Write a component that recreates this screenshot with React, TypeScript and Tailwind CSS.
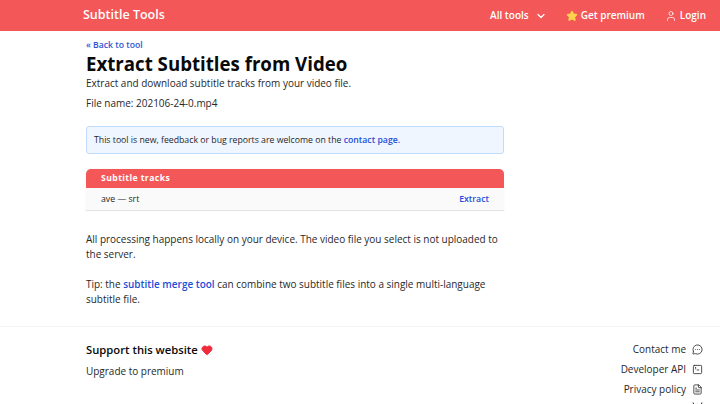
import { ChevronDown, FileText, MessageCircleMore, SquareTerminal, Star, User, Heart } from "lucide-react";

const footerLinks = [
	{ label: "Contact me", icon: MessageCircleMore },
	{ label: "Developer API", icon: SquareTerminal },
	{ label: "Privacy policy", icon: FileText },
];

export default function App() {
	return (
		<div className="h-[404px] overflow-hidden bg-white font-['Open_Sans',sans-serif] text-[9.97px] text-[#27272a]">
			{/* Header */}
			<header className="flex h-[31px] items-center justify-between bg-[#f35757] pl-[83px] pr-[14px] text-white">
				<a href="#" className="text-[12.5px] font-semibold">Subtitle Tools</a>
				<nav className="flex items-center text-[10px] font-semibold">
					<a href="#" className="flex items-center gap-[6px]">
						All tools
						<ChevronDown size={12} strokeWidth={2.5} />
					</a>
					<a href="#" className="ml-[19px] flex items-center gap-[3px]">
						<Star size={12} className="fill-[#fcd34d] text-[#fcd34d]" />
						Get premium
					</a>
					<a href="#" className="ml-[20px] flex items-center gap-[3px]">
						<User size={12} strokeWidth={1.5} />
						Login
					</a>
				</nav>
			</header>

			{/* Main */}
			<main className="ml-[86px] w-[418px] pt-[8px]">
				<a href="#" className="block text-[8.67px] leading-[12px] font-semibold text-[#2f55d4]">« Back to tool</a>
				<h1 className="mt-[1px] text-[18.67px] leading-[24px] font-bold text-[#0a0a0a]">Extract Subtitles from Video</h1>
				<p className="leading-[15px]">Extract and download subtitle tracks from your video file.</p>
				<p className="mt-[5px] leading-[15px]">File name: 202106-24-0.mp4</p>

				<div className="mt-[15px] rounded-[3px] border border-[#bfdbfe] bg-[#eff6ff] px-[7px] py-[6px] text-[8.72px] leading-[14px]">
					This tool is new, feedback or bug reports are welcome on the{" "}
					<a href="#" className="font-semibold text-[#1d4ed8]">contact page.</a>
				</div>

				<div className="mt-[15px] overflow-hidden rounded-t-[5px] border-b border-[#e5e5e5] bg-[#fafafa] shadow-[0_0_1px_#d4d4d4]">
					<div className="h-[19px] bg-[#f35757] px-[15px] text-[8.67px] leading-[18px] font-bold tracking-[0.4px] text-white">Subtitle tracks</div>
					<div className="flex h-[22px] items-center justify-between px-[15px] pt-[1px] text-[8.75px]">
						<span>ave — srt</span>
						<a href="#" className="font-semibold text-[#1d4ed8]">Extract</a>
					</div>
				</div>

				<p className="mt-[21px] leading-[15px]">All processing happens locally on your device. The video file you select is not uploaded to the server.</p>
				<p className="mt-[15px] leading-[15px]">
					Tip: the <a href="#" className="font-semibold text-[#1d4ed8]">subtitle merge tool</a> can combine two subtitle files into a single multi-language subtitle file.
				</p>
			</main>

			{/* Footer */}
			<footer className="mt-[19px] flex items-start justify-between border-t border-[#f3f4f6] pl-[86px] pr-[17px] pt-[15px]">
				<div>
					<div className="flex items-center gap-[3px] text-[11.25px] leading-[16px] font-semibold text-[#0a0a0a]">
						Support this website
						<Heart size={12} className="fill-[#ef2b3d] text-[#ef2b3d]" />
					</div>
					<a href="#" className="mt-[5px] block leading-[16px]">Upgrade to premium</a>
				</div>
				<ul className="-mt-[1px] flex flex-col items-end gap-[4px]">
					{footerLinks.map(({ label, icon: Icon }) => (
						<li key={label} className="flex h-[16px] items-center gap-[6px]">
							{label}
							<Icon size={11} strokeWidth={1.75} />
						</li>
					))}
					{/* next row is cut off by the window, only the icon's top shows */}
					<li className="flex h-[16px] items-center">
						<svg width="11" height="14" viewBox="0 0 11 14" fill="none" stroke="currentColor" strokeWidth="1">
							<path d="M1 0.5 L2 3 M10 0.5 L9 3 M2 3 Q5.5 1.8 9 3 L10 7 Q9.5 11 5.5 11 Q1.5 11 1 7 Z" />
						</svg>
					</li>
				</ul>
			</footer>
		</div>
	);
}
